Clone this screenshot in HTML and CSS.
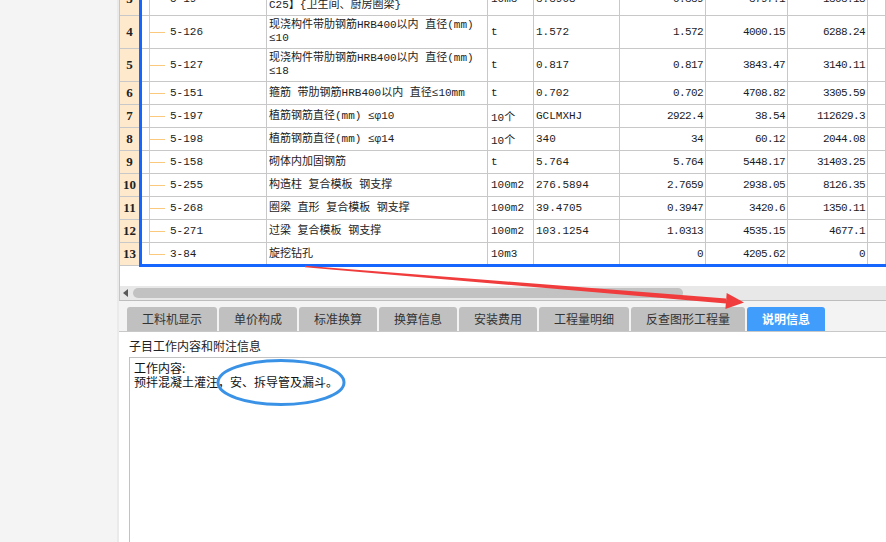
FILE: index.html
```html
<!DOCTYPE html>
<html lang="zh-CN">
<head>
<meta charset="utf-8">
<title>子目说明信息</title>
<link rel="stylesheet" href="styles.css">
</head>
<body>
<div class="app">
  <aside class="side"></aside>
  <main class="main">
    <section class="grid-view">
      <div class="rows">
        <div class="row tall"><div class="num">3</div><div class="code">5-19</div><div class="name">现浇混凝土 圈梁【预拌混凝土<br>C25】{卫生间、厨房圈梁}</div><div class="unit">10m3</div><div class="qty">3.3908</div><div class="val">0.339</div><div class="val">3797.1</div><div class="val">1303.18</div><div></div></div>
        <div class="row tall"><div class="num">4</div><div class="code">5-126</div><div class="name">现浇构件带肋钢筋HRB400以内 直径(mm)<br>≤10</div><div class="unit">t</div><div class="qty">1.572</div><div class="val">1.572</div><div class="val">4000.15</div><div class="val">6288.24</div><div></div></div>
        <div class="row tall"><div class="num">5</div><div class="code">5-127</div><div class="name">现浇构件带肋钢筋HRB400以内 直径(mm)<br>≤18</div><div class="unit">t</div><div class="qty">0.817</div><div class="val">0.817</div><div class="val">3843.47</div><div class="val">3140.11</div><div></div></div>
        <div class="row"><div class="num">6</div><div class="code">5-151</div><div class="name">箍筋 带肋钢筋HRB400以内 直径≤10mm</div><div class="unit">t</div><div class="qty">0.702</div><div class="val">0.702</div><div class="val">4708.82</div><div class="val">3305.59</div><div></div></div>
        <div class="row"><div class="num">7</div><div class="code">5-197</div><div class="name">植筋钢筋直径(mm) ≤φ10</div><div class="unit">10个</div><div class="qty">GCLMXHJ</div><div class="val">2922.4</div><div class="val">38.54</div><div class="val">112629.3</div><div></div></div>
        <div class="row"><div class="num">8</div><div class="code">5-198</div><div class="name">植筋钢筋直径(mm) ≤φ14</div><div class="unit">10个</div><div class="qty">340</div><div class="val">34</div><div class="val">60.12</div><div class="val">2044.08</div><div></div></div>
        <div class="row"><div class="num">9</div><div class="code">5-158</div><div class="name">砌体内加固钢筋</div><div class="unit">t</div><div class="qty">5.764</div><div class="val">5.764</div><div class="val">5448.17</div><div class="val">31403.25</div><div></div></div>
        <div class="row"><div class="num">10</div><div class="code">5-255</div><div class="name">构造柱 复合模板 钢支撑</div><div class="unit">100m2</div><div class="qty">276.5894</div><div class="val">2.7659</div><div class="val">2938.05</div><div class="val">8126.35</div><div></div></div>
        <div class="row"><div class="num">11</div><div class="code">5-268</div><div class="name">圈梁 直形 复合模板 钢支撑</div><div class="unit">100m2</div><div class="qty">39.4705</div><div class="val">0.3947</div><div class="val">3420.6</div><div class="val">1350.11</div><div></div></div>
        <div class="row"><div class="num">12</div><div class="code">5-271</div><div class="name">过梁 复合模板 钢支撑</div><div class="unit">100m2</div><div class="qty">103.1254</div><div class="val">1.0313</div><div class="val">4535.15</div><div class="val">4677.1</div><div></div></div>
        <div class="row"><div class="num">13</div><div class="code last">3-84</div><div class="name">旋挖钻孔</div><div class="unit">10m3</div><div class="qty"></div><div class="val">0</div><div class="val">4205.62</div><div class="val">0</div><div></div></div>
      </div>
      <div class="selection"></div>
    </section>
    <div class="hscroll"><span class="arrow-left"></span><div class="thumb"></div></div>
    <nav class="tabs">
      <div class="tab">工料机显示</div>
      <div class="tab">单价构成</div>
      <div class="tab">标准换算</div>
      <div class="tab">换算信息</div>
      <div class="tab">安装费用</div>
      <div class="tab">工程量明细</div>
      <div class="tab">反查图形工程量</div>
      <div class="tab active">说明信息</div>
    </nav>
    <section class="detail">
      <div class="detail-title">子目工作内容和附注信息</div>
      <div class="detail-box">
        <p>工作内容:</p>
        <p>预拌混凝土灌注，安、拆导管及漏斗。</p>
      </div>
    </section>
  </main>
</div>
<svg class="annot" width="886" height="542" viewBox="0 0 886 542">
  <polygon points="305,265.8 726,298.6 726,303.6 305,267.3" fill="#f03c3c"/>
  <polygon points="726.7,293.1 744,302.5 725.4,309.1" fill="#f03c3c"/>
  <ellipse cx="281" cy="382.5" rx="63" ry="22" fill="none" stroke="#3a92e6" stroke-width="3"/>
</svg>
</body>
</html>
```

FILE: styles.css
```css
* { box-sizing: border-box; }
html, body { margin: 0; padding: 0; }
body {
  width: 886px;
  height: 542px;
  overflow: hidden;
  position: relative;
  background: #f4f4f4;
  font-family: "Noto Sans CJK SC", sans-serif;
  color: #222;
}
.app { display: flex; height: 100%; }
.side {
  width: 119px;
  flex: none;
  background: #f4f4f4;
  border-right: 2px solid #eaeaea;
}
.main {
  flex: 1;
  min-width: 0;
  display: flex;
  flex-direction: column;
  background: #fff;
}

/* grid */
.grid-view {
  height: 286px;
  flex: none;
  position: relative;
  overflow: hidden;
  border-left: 1px solid #c6c6c6;
  font-family: "Liberation Mono", "Noto Sans CJK SC", monospace;
  font-size: 11px;
  color: #1c1c1c;
}
.rows { margin-top: -17px; }
.row {
  display: grid;
  grid-template-columns: 19px 128px 221px 46px 86px 86px 82px 80px 1fr;
  height: 23px;
}
.row.tall { height: 33px; }
.row > div {
  border-right: 1px solid #c8c8c8;
  border-bottom: 1px solid #c8c8c8;
  display: flex;
  align-items: center;
  white-space: nowrap;
  overflow: hidden;
}
.row > .num {
  background: #fee9cd;
  justify-content: center;
  font-family: "Liberation Serif", serif;
  font-weight: bold;
  font-size: 13px;
  color: #222;
  border-right: none;
}
.code {
  padding-left: 31px;
  background:
    linear-gradient(#fbc97c, #fbc97c) 10px 0 / 1px 100% no-repeat,
    linear-gradient(#fbc97c, #fbc97c) 10px 50% / 16px 1px no-repeat;
}
.code.last {
  background:
    linear-gradient(#fbc97c, #fbc97c) 10px 0 / 1px 50% no-repeat,
    linear-gradient(#fbc97c, #fbc97c) 10px 50% / 16px 1px no-repeat;
}
.name { padding-left: 2px; line-height: 13px; }
.unit { padding-left: 3px; }
.qty { padding-left: 2px; }
.val {
  justify-content: flex-end;
  padding-right: 2px;
  letter-spacing: -0.6px;
}
.selection {
  position: absolute;
  left: 19px;
  top: -10px;
  right: -10px;
  height: 277px;
  border: 3px solid #1565ff;
  pointer-events: none;
}

/* scrollbar */
.hscroll {
  flex: none;
  height: 15px;
  border-left: 1px solid #c6c6c6;
  border-bottom: 1px solid #bdbdbd;
  background: #e8e8e8;
  display: flex;
  align-items: center;
  padding-left: 3px;
}
.arrow-left {
  width: 0;
  height: 0;
  border-right: 5px solid #5a5a5a;
  border-top: 4px solid transparent;
  border-bottom: 4px solid transparent;
}
.thumb {
  margin-left: 5px;
  width: 550px;
  height: 10px;
  border-radius: 5px;
  background: #c2c2c2;
}

/* tabs */
.tabs {
  flex: none;
  height: 31px;
  background: #f3f3f3;
  border-bottom: 1px solid #c8c8c8;
  display: flex;
  align-items: flex-end;
  gap: 2px;
  padding-left: 8px;
}
.tab {
  height: 24px;
  padding: 0 15px;
  background: #c0c0c0;
  border-radius: 3px 3px 0 0;
  font-size: 12px;
  line-height: 24px;
  color: #333;
  white-space: nowrap;
}
.tab.active {
  background: #419dfc;
  color: #fff;
  font-weight: bold;
}

/* detail */
.detail {
  flex: 1;
  padding: 6px 0 0 10px;
  background: #fff;
  overflow: hidden;
}
.detail-title {
  font-size: 12px;
  line-height: 16px;
  height: 16px;
  color: #222;
}
.detail-box {
  margin-top: 3px;
  width: 800px;
  height: 300px;
  border: 1px solid #c2c2c2;
  padding: 3px 4px;
  font-size: 12px;
  line-height: 14px;
  color: #111;
}
.detail-box p { margin: 0; }

.annot {
  position: absolute;
  top: 0;
  left: 0;
  pointer-events: none;
}
```
